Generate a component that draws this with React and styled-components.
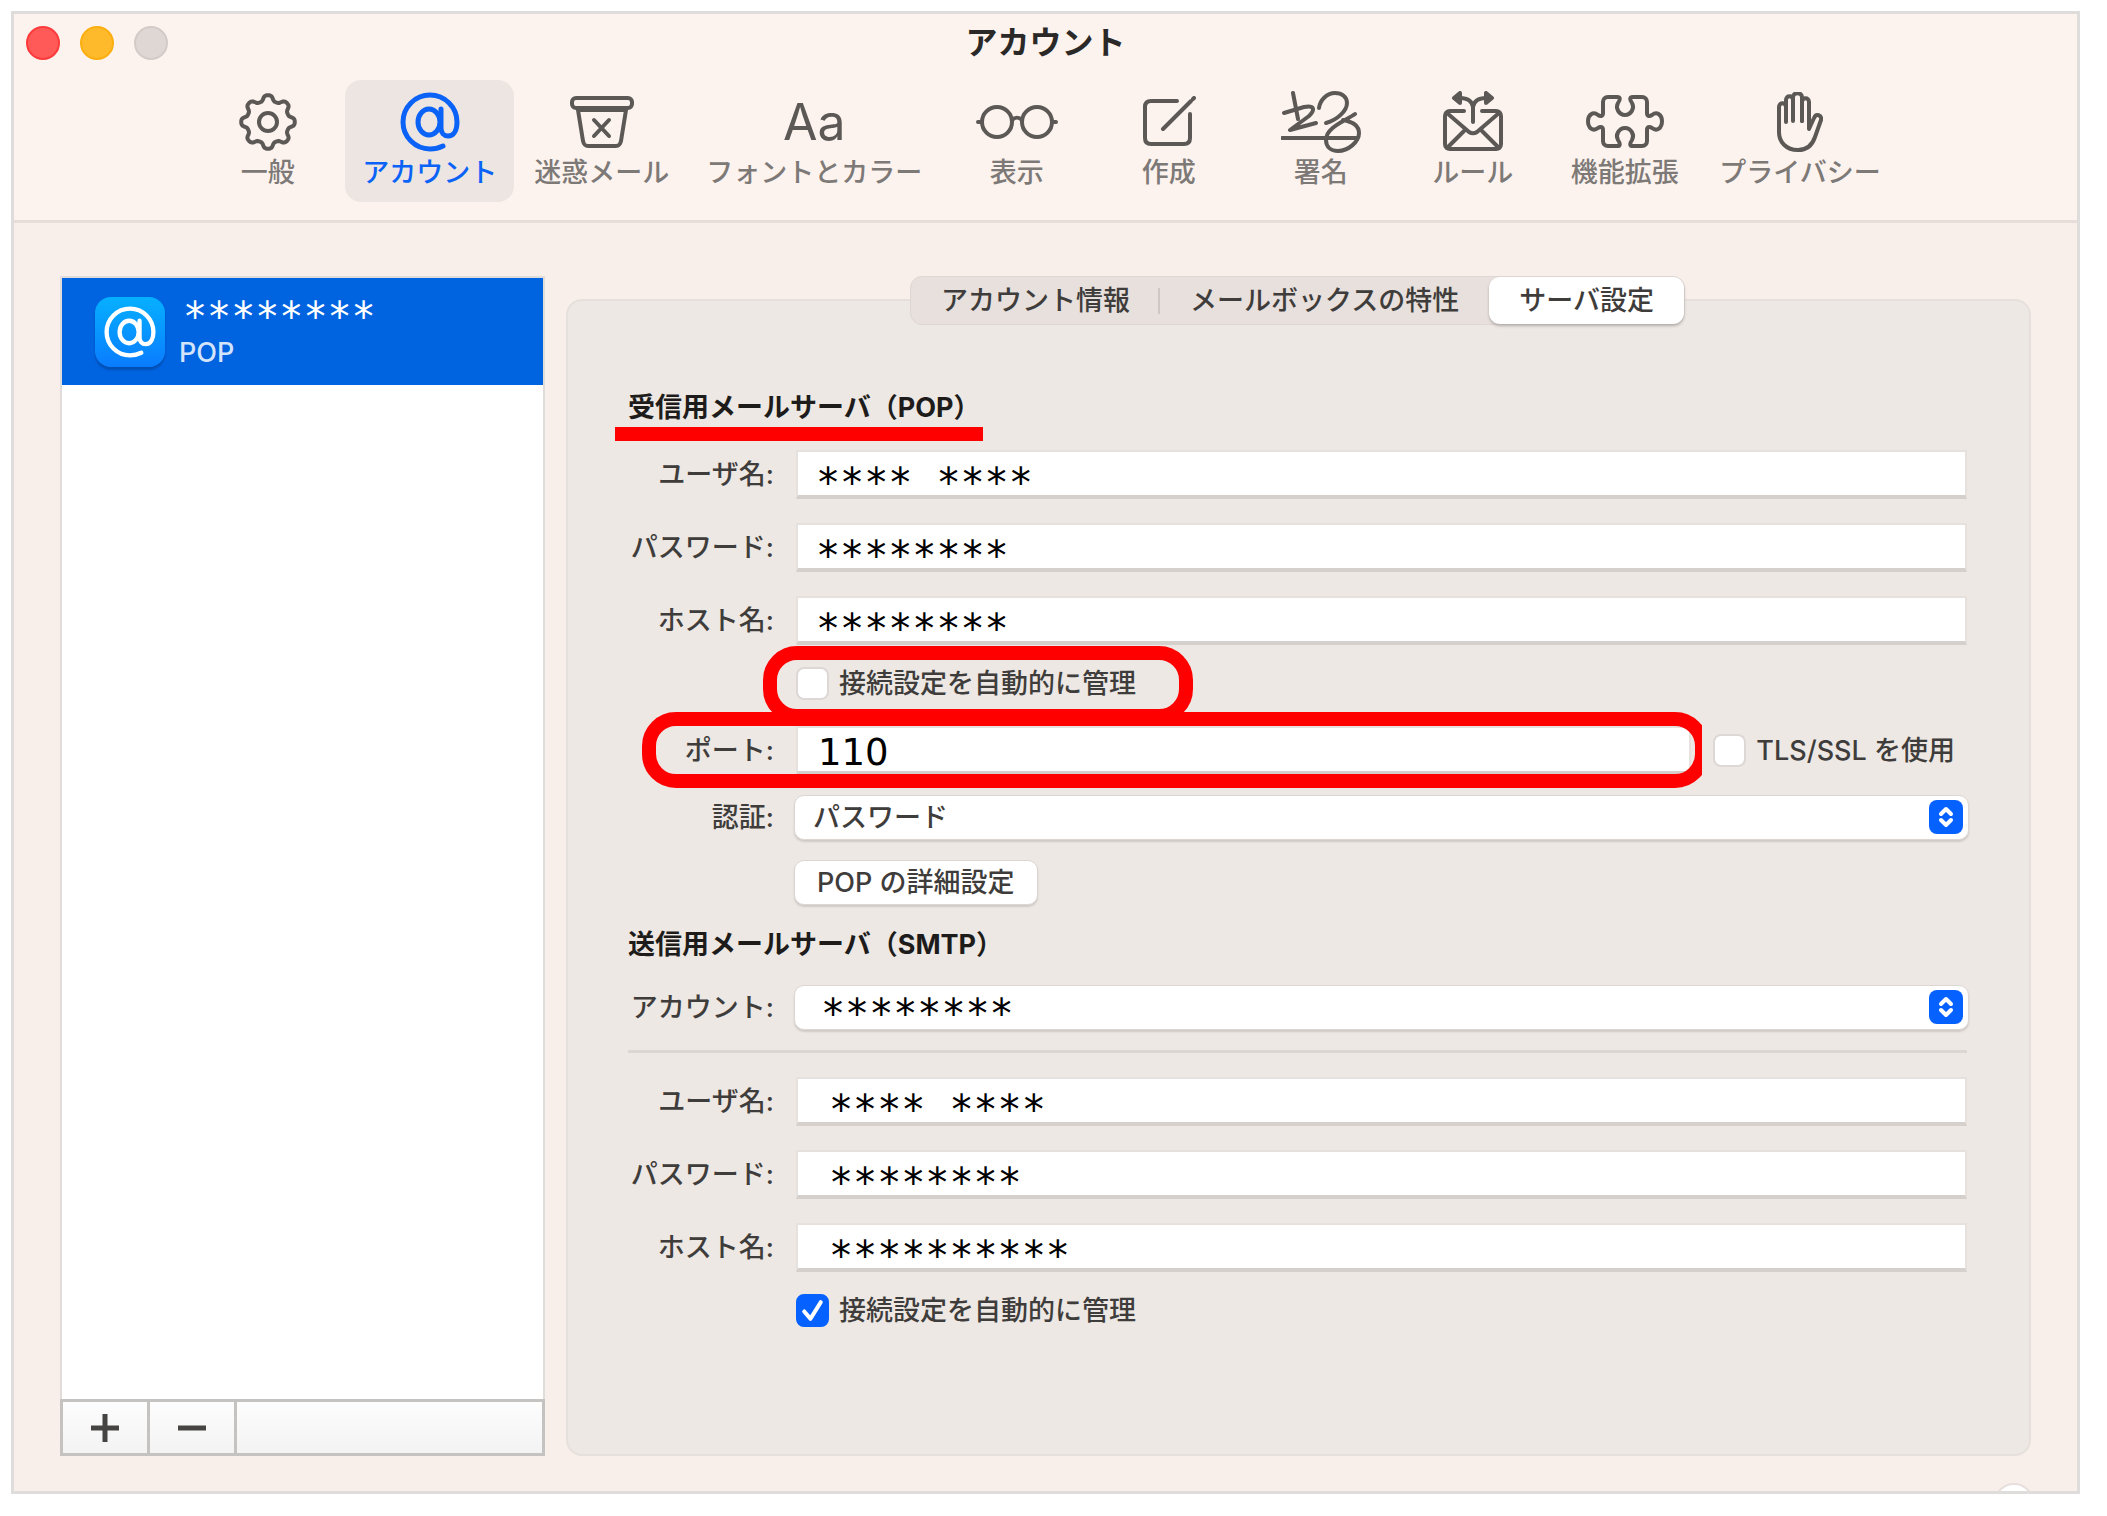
import { useState } from 'react';
import styled, { createGlobalStyle, css } from 'styled-components';

const gearPath = () => {
  const points = [];
  for (let i = 0; i < 160; i++) {
    const angle = (i / 160) * Math.PI * 2;
    const radius = 24 + 3 * Math.tanh(1.6 * Math.cos(angle * 8));
    const x = 30 + radius * Math.sin(angle);
    const y = 30 - radius * Math.cos(angle);
    points.push(`${x.toFixed(2)} ${y.toFixed(2)}`);
  }
  return `M${points.join('L')}Z`;
};

const GearIcon = () => (
  <Drawing width="60" height="60" viewBox="0 0 60 60">
    <path d={gearPath()} />
    <circle cx="30" cy="30" r="9" />
  </Drawing>
);

const AtIcon = ({ size = 60 }) => (
  <Drawing width={size} height={size} viewBox="0 0 60 60" $bold>
    <ellipse cx="29" cy="30" rx="11" ry="13" />
    <path d="M41 17v19c0 5 3 8 7 8c6 0 9-6 9-14A27 27 0 1 0 30 57c5 0 9-1 13-3" />
  </Drawing>
);

const JunkIcon = () => (
  <Drawing width="64" height="52" viewBox="0 0 64 52">
    <rect x="2" y="2" width="60" height="10" rx="4" />
    <path d="M8 14l5 31c1 4 2 5 5 5h28c3 0 4-1 5-5l5-31zM24 24l15 16M39 24l-15 16" />
  </Drawing>
);

const GlassesIcon = () => (
  <Drawing width="82" height="38" viewBox="0 0 82 38">
    <circle cx="21" cy="19" r="15" />
    <circle cx="61" cy="19" r="15" />
    <path d="M36 17c3-3 7-3 10 0M2 19h4M76 19h4" />
  </Drawing>
);

const ComposeIcon = () => (
  <Drawing width="54" height="52" viewBox="0 0 54 52">
    <path d="M35 5H9c-4 0-6 2-6 6v31c0 4 2 6 6 6h33c4 0 6-2 6-6V18" />
    <path d="M21 33L49 5M51 3l1-1" />
  </Drawing>
);

const SignatureIcon = () => (
  <Drawing width="80" height="62" viewBox="0 0 80 62">
    <path d="M12 2l5 26M3 22l20-6c11-2 11 3 5 9L9 39l26-7" />
    <path d="M38 17C39 9 46 2 54 2c7 0 12 4 12 10c0 8-10 17-21 20" />
    <path d="M74 23C66 29 45 36 45 49c0 7 5 11 12 11c10 0 21-9 21-18c0-6-5-11-16-13M1 47h76" />
  </Drawing>
);

const RulesIcon = () => (
  <Drawing width="62" height="62" viewBox="0 0 62 62">
    <path d="M22 20H8c-3 0-5 2-5 5v28c0 3 2 5 5 5h46c3 0 5-2 5-5V25c0-3-2-5-5-5H40" />
    <path d="M5 22l22 19c3 2 5 2 8 0l22-19M5 57l17-17M57 57L40 40" />
    <path d="M31 31V16M18 7c7 0 12 3 13 9c1-6 6-9 13-9" />
    <path fill="currentColor" d="M12 7l6-5v10zM50 7l-6-5v10z" />
  </Drawing>
);

const PuzzleIcon = () => (
  <Drawing width="78" height="54" viewBox="0 0 78 54">
    <path d="M22 2H31C35 2 34 5 32 8C29 13 33 20 39 20C45 20 49 13 46 8C44 5 43 2 47 2H56C59 2 61 4 61 7V18C61 21 63 22 66 20C71 16 76 20 76 26C76 33 71 37 66 33C63 31 61 32 61 35V46C61 49 59 51 56 51H47C43 51 44 48 46 45C49 40 45 33 39 33C33 33 29 40 32 45C34 48 35 51 31 51H22C19 51 17 49 17 46V35C17 32 15 31 12 33C7 37 2 33 2 26C2 20 7 16 12 20C15 22 17 21 17 18V7C17 4 19 2 22 2Z" />
  </Drawing>
);

const HandIcon = () => (
  <Drawing width="46" height="60" viewBox="0 0 46 60">
    <path d="M9 30V15c0-5-7-5-7 0v25c0 10 7 18 19 18c8 0 14-4 17-13l6-17c1-5-5-7-7-2l-5 11V10c0-5-7-5-7 0v19" />
    <path d="M9 16V8c0-5 7-5 7 0v21M16 8V5c0-5 9-5 9 0v24" />
  </Drawing>
);

const toolbarItems = [
  { label: '一般', icon: <GearIcon /> },
  { label: 'アカウント', icon: <AtIcon /> },
  { label: '迷惑メール', icon: <JunkIcon /> },
  { label: 'フォントとカラー', icon: 'Aa' },
  { label: '表示', icon: <GlassesIcon /> },
  { label: '作成', icon: <ComposeIcon /> },
  { label: '署名', icon: <SignatureIcon /> },
  { label: 'ルール', icon: <RulesIcon /> },
  { label: '機能拡張', icon: <PuzzleIcon /> },
  { label: 'プライバシー', icon: <HandIcon /> },
];

const tabs = ['アカウント情報', 'メールボックスの特性', 'サーバ設定'];

const Field = ({ id, label, value, indent }) => (
  <Row>
    <Label htmlFor={id}>{label}:</Label>
    <TextInput id={id} type="text" defaultValue={value} $indent={indent} />
  </Row>
);

const Popup = ({ id, label, value, masked, space }) => (
  <Row $space={space}>
    <Label htmlFor={id}>{label}:</Label>
    <SelectBox>
      <Select id={id} $masked={masked}>
        <option>{value}</option>
      </Select>
      <Stepper>
        <svg width="16" height="24" viewBox="0 0 16 24">
          <path d="M3 9l5-5 5 5M3 15l5 5 5-5" />
        </svg>
      </Stepper>
    </SelectBox>
  </Row>
);

const Check = ({ id, label, checked }) => (
  <CheckLabel htmlFor={id}>
    <Checkbox id={id} type="checkbox" defaultChecked={checked} />
    <svg viewBox="0 0 32 32">
      <path d="M8 17l6 7L24 8" />
    </svg>
    {label}
  </CheckLabel>
);

const App = () => {
  const [section, setSection] = useState('アカウント');
  const [tab, setTab] = useState('サーバ設定');

  return (
    <Page>
      <GlobalStyle />
      <Window>
        <Header>
          <TitleBar>
            <Lights>
              <Light $color="#ff5a57" $edge="#fb3b3c" aria-label="閉じる" />
              <Light $color="#ffba2b" $edge="#fbae10" aria-label="しまう" />
              <Light $color="#dfd7d4" $edge="#d3cbc8" aria-label="拡大" />
            </Lights>
            <Title>アカウント</Title>
          </TitleBar>
          <Toolbar>
            {toolbarItems.map(({ label, icon }) => (
              <ToolButton
                key={label}
                $active={label === section}
                onClick={() => setSection(label)}
              >
                <IconSlot $active={label === section}>{icon}</IconSlot>
                {label}
              </ToolButton>
            ))}
          </Toolbar>
        </Header>

        <Content>
          <Sidebar>
            <Account>
              <Badge>
                <AtIcon size={52} />
              </Badge>
              <div>
                <Masked>********</Masked>
                <Kind>POP</Kind>
              </div>
            </Account>
            <Footer>
              <FooterButton aria-label="追加">
                <svg width="28" height="28" viewBox="0 0 28 28">
                  <path d="M0 14h28M14 0v28" />
                </svg>
              </FooterButton>
              <FooterButton aria-label="削除">
                <svg width="28" height="28" viewBox="0 0 28 28">
                  <path d="M0 14h28" />
                </svg>
              </FooterButton>
            </Footer>
          </Sidebar>

          <Panel>
            <Tabs role="tablist">
              {tabs.map((name) => (
                <Tab
                  key={name}
                  role="tab"
                  aria-selected={name === tab}
                  $active={name === tab}
                  onClick={() => setTab(name)}
                >
                  {name}
                </Tab>
              ))}
            </Tabs>

            <Form>
              <Heading $marked>受信用メールサーバ（POP）</Heading>
              <Field id="in-user" label="ユーザ名" value="**** ****" />
              <Field id="in-pass" label="パスワード" value="********" />
              <Field id="in-host" label="ホスト名" value="********" />
              <Row $space={22}>
                <Indented>
                  <Check id="in-auto" label="接続設定を自動的に管理" />
                  <CheckMark />
                </Indented>
              </Row>
              <Row $space={26}>
                <Label htmlFor="in-port">ポート:</Label>
                <PortLine>
                  <TextInput id="in-port" type="text" defaultValue="110" $plain />
                  <Check id="in-tls" label="TLS/SSL を使用" />
                </PortLine>
                <PortMark />
              </Row>
              <Popup id="in-auth" label="認証" value="パスワード" space={20} />
              <Row $space={20}>
                <Indented>
                  <PushButton type="button">POP の詳細設定</PushButton>
                </Indented>
              </Row>

              <Heading $space={22}>送信用メールサーバ（SMTP）</Heading>
              <Popup id="out-account" label="アカウント" value="********" masked space={22} />
              <Divider />
              <Field id="out-user" label="ユーザ名" value="**** ****" indent />
              <Field id="out-pass" label="パスワード" value="********" indent />
              <Field id="out-host" label="ホスト名" value="**********" indent />
              <Row $space={22}>
                <Indented>
                  <Check id="out-auto" label="接続設定を自動的に管理" checked />
                </Indented>
              </Row>
            </Form>
          </Panel>
        </Content>
        <HelpButton aria-label="ヘルプ" />
      </Window>
    </Page>
  );
};

export default App;

const GlobalStyle = createGlobalStyle`
  * {
    box-sizing: border-box;
  }

  body {
    margin: 0;
    background: #fff;
  }

  body, button, input, select {
    font-family: Inter, 'Noto Sans CJK JP', sans-serif;
    font-size: 27px;
    font-weight: 500;
    line-height: 36px;
    color: #3f3d3b;
  }

  button {
    padding: 0;
    border: none;
    background: none;
  }
`;

const maskedText = css`
  font-family: 'DejaVu Sans Mono', monospace;
  font-size: 40px;
  font-weight: 400;
  color: #000;
`;

const Page = styled.div`
  display: flex;
  min-height: 100vh;
  padding: 11px 27px 22px 11px;
`;

const Window = styled.div`
  position: relative;
  overflow: hidden;
  flex: 1;
  display: flex;
  flex-direction: column;
  border: 3px solid #dedddc;
  background: #f8eeea;
`;

const Header = styled.header`
  padding-bottom: 18px;
  border-bottom: 3px solid #e7dddb;
  background: #fcf3ee;
`;

const TitleBar = styled.div`
  display: grid;
  grid-template-columns: 1fr auto 1fr;
  align-items: center;
  height: 58px;
  margin-bottom: 8px;
  padding: 0 12px;
`;

const Lights = styled.div`
  display: flex;
  gap: 20px;
`;

const Light = styled.button`
  width: 34px;
  height: 34px;
  border: 2px solid ${({ $edge }) => $edge};
  border-radius: 50%;
  background: ${({ $color }) => $color};
`;

const Title = styled.h1`
  margin: 0;
  font-size: 32px;
  font-weight: 700;
  color: #2b2928;
`;

const Toolbar = styled.nav`
  display: flex;
  justify-content: center;
  gap: 3px;
`;

const ToolButton = styled.button`
  display: flex;
  flex-direction: column;
  align-items: center;
  min-width: 149px;
  height: 122px;
  padding: 9px 17px 0;
  border-radius: 16px;
  color: #7d7977;

  ${({ $active }) =>
    $active &&
    css`
      background: #ede5e1;
      color: #0a63f6;
    `}
`;

const IconSlot = styled.span`
  display: flex;
  align-items: center;
  justify-content: center;
  height: 66px;
  font-size: 50px;
  font-weight: 400;
  color: ${({ $active }) => ($active ? '#0a63f6' : '#5b5856')};
`;

const Drawing = styled.svg`
  fill: none;
  stroke: currentColor;
  stroke-width: ${({ $bold }) => ($bold ? 5 : 4)};
  stroke-linecap: round;
  stroke-linejoin: round;
`;

const Content = styled.main`
  flex: 1;
  display: flex;
  gap: 21px;
  padding: 53px 46px 35px;
`;

const Sidebar = styled.aside`
  display: flex;
  flex-direction: column;
  width: 485px;
  border: 2px solid #dfdcda;
  border-bottom: none;
  background: #fff;
`;

const Account = styled.div`
  display: flex;
  align-items: center;
  gap: 14px;
  height: 107px;
  padding: 0 33px;
  background: #0063e0;
`;

const Badge = styled.span`
  display: flex;
  align-items: center;
  justify-content: center;
  width: 70px;
  height: 70px;
  border-radius: 16px;
  background: linear-gradient(#06b0ff, #0a7cff);
  color: #fff;
  box-shadow: 0 3px 2px #0050b4;
`;

const Masked = styled.div`
  ${maskedText}
  padding: 6px 0 0 4px;
  color: #fff;
`;

const Kind = styled.div`
  color: #d3e4fb;
`;

const Footer = styled.div`
  display: flex;
  height: 57px;
  margin: auto -2px 0;
  border: 3px solid #c4c3c2;
  background: linear-gradient(#fdfdfd, #f3f3f3);
`;

const FooterButton = styled.button`
  display: flex;
  align-items: center;
  justify-content: center;
  width: 87px;
  border-right: 3px solid #c4c3c2;

  path {
    stroke: #454443;
    stroke-width: 5;
  }
`;

const Panel = styled.section`
  flex: 1;
  margin-top: 23px;
  padding: 0 62px 60px 60px;
  border: 2px solid #e6e0dc;
  border-radius: 16px;
  background: #ede8e4;
`;

const Tabs = styled.div`
  display: flex;
  width: fit-content;
  margin: -25px auto 0;
  border: 1px solid #ddd6d3;
  border-radius: 12px;
  background: #e7e0dd;
`;

const Tab = styled.button`
  height: 47px;
  padding: 0 30px;
  border-radius: 11px;

  &:first-child {
    background: linear-gradient(#cfc8c5, #cfc8c5) right / 2px 26px no-repeat;
  }

  ${({ $active }) =>
    $active &&
    css`
      background: #fff;
      box-shadow: 0 2px 3px #b5afac;
    `}
`;

const Form = styled.form`
  display: flex;
  flex-direction: column;
  padding-top: 65px;
`;

const Heading = styled.h2`
  position: relative;
  margin: ${({ $space = 0 }) => $space}px 0 0;
  font-size: 27px;
  font-weight: 700;
  color: #1d1c1b;

  ${({ $marked }) =>
    $marked &&
    css`
      &::after {
        content: '';
        position: absolute;
        top: 37px;
        left: -13px;
        width: 368px;
        height: 14px;
        background: #f00;
      }
    `}
`;

const Row = styled.div`
  position: relative;
  display: grid;
  grid-template-columns: 146px 1fr;
  column-gap: 22px;
  align-items: center;
  margin-top: ${({ $space = 24 }) => $space}px;
`;

const Label = styled.label`
  text-align: right;
  white-space: nowrap;
`;

const Indented = styled.div`
  position: relative;
  grid-column: 2;
  display: flex;
`;

const TextInput = styled.input`
  flex: 1;
  min-width: 0;
  width: 100%;
  height: 49px;
  border: 2px solid #e7e1de;
  border-bottom: 4px solid #d6d0cd;
  outline: none;
  background: #fff;

  ${({ $plain, $indent }) =>
    $plain
      ? css`
          padding: 6px 20px 0;
          font-family: 'DejaVu Sans', sans-serif;
          font-size: 37px;
          font-weight: 400;
          color: #000;
        `
      : css`
          ${maskedText}
          padding: 19px ${$indent ? 31 : 18}px 0;
        `}
`;

const SelectBox = styled.div`
  position: relative;
  margin: 0 -2px;
`;

const Select = styled.select`
  display: block;
  width: 100%;
  height: 45px;
  padding: 0 48px 0 18px;
  border: 1px solid #ddd7d4;
  border-radius: 10px;
  appearance: none;
  background: #fff;
  box-shadow: 0 2px 2px #d0cac7;

  ${({ $masked }) =>
    $masked &&
    css`
      ${maskedText}
      padding: 10px 48px 0 26px;
    `}
`;

const Stepper = styled.span`
  position: absolute;
  top: 5px;
  right: 6px;
  display: flex;
  align-items: center;
  justify-content: center;
  width: 34px;
  height: 34px;
  border-radius: 8px;
  background: #0561ff;
  pointer-events: none;

  path {
    fill: none;
    stroke: #fff;
    stroke-width: 4;
    stroke-linecap: round;
    stroke-linejoin: round;
  }
`;

const CheckLabel = styled.label`
  position: relative;
  display: flex;
  align-items: center;
  gap: 10px;
  height: 33px;
  white-space: nowrap;

  svg {
    position: absolute;
    left: 0;
    width: 33px;
    height: 33px;
    fill: none;
    stroke: #fff;
    stroke-width: 4;
    stroke-linecap: round;
    stroke-linejoin: round;
    pointer-events: none;
  }
`;

const Checkbox = styled.input`
  appearance: none;
  width: 33px;
  height: 33px;
  margin: 0;
  border: 2px solid #ddd8d5;
  border-radius: 8px;
  background: #fff;

  &:checked {
    border-color: #0561ff;
    background: #0561ff;
  }
`;

const PortLine = styled.div`
  display: flex;
  align-items: center;
  gap: 22px;
  padding-right: 12px;
`;

const Mark = styled.span`
  position: absolute;
  border: 14px solid #f00;
  border-radius: 34px;
  pointer-events: none;
`;

const CheckMark = styled(Mark)`
  top: -21px;
  left: -33px;
  width: 430px;
  height: 77px;
`;

const PortMark = styled(Mark)`
  top: -14px;
  left: 14px;
  right: 258px;
  height: 76px;
  clip-path: inset(0 7px 0 0);
`;

const PushButton = styled.button`
  height: 45px;
  margin-left: -2px;
  padding: 0 22px;
  border: 1px solid #ddd7d4;
  border-radius: 10px;
  background: #fff;
  box-shadow: 0 2px 2px #d0cac7;
`;

const Divider = styled.hr`
  width: 100%;
  height: 3px;
  margin: 20px 0 0;
  border: none;
  background: #dcd6d3;
`;

const HelpButton = styled.button`
  position: absolute;
  right: 43px;
  bottom: -32px;
  width: 40px;
  height: 40px;
  border: 2px solid #e6dfdc;
  border-radius: 50%;
  background: #fff;
`;
